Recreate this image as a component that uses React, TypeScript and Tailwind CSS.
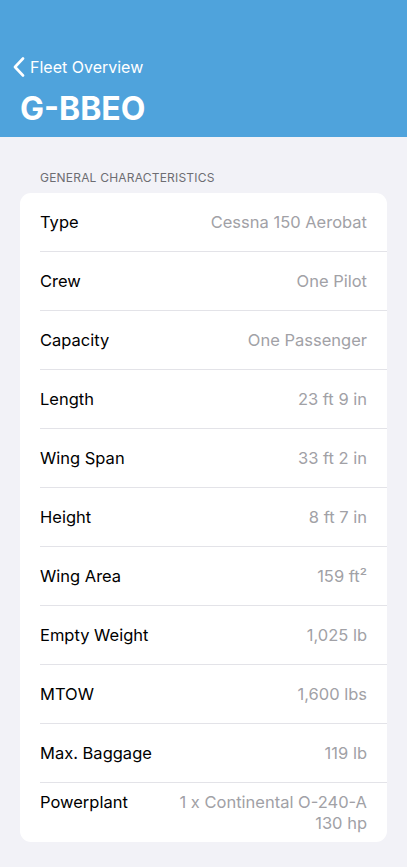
type Spec = { label: string; value: string[] };

const SPECS: Spec[] = [
  { label: "Type", value: ["Cessna 150 Aerobat"] },
  { label: "Crew", value: ["One Pilot"] },
  { label: "Capacity", value: ["One Passenger"] },
  { label: "Length", value: ["23 ft 9 in"] },
  { label: "Wing Span", value: ["33 ft 2 in"] },
  { label: "Height", value: ["8 ft 7 in"] },
  { label: "Wing Area", value: ["159 ft²"] },
  { label: "Empty Weight", value: ["1,025 lb"] },
  { label: "MTOW", value: ["1,600 lbs"] },
  { label: "Max. Baggage", value: ["119 lb"] },
  { label: "Powerplant", value: ["1 x Continental O-240-A", "130 hp"] },
];

function Row({ spec, last }: { spec: Spec; last: boolean }) {
  const multi = spec.value.length > 1;
  return (
    <div className="pl-5">
      <div
        className={
          "flex items-start justify-between pr-5 text-[16.5px] leading-[21px] " +
          (multi ? "py-[8.5px]" : "py-[18.5px]") +
          (last ? "" : " border-b border-[#e3e3e8]")
        }
      >
        <span className="text-black">{spec.label}</span>
        <span className="text-right text-[#a1a1a6]">
          {spec.value.map((v) => (
            <div key={v}>{v}</div>
          ))}
        </span>
      </div>
    </div>
  );
}

export default function App() {
  return (
    <div className="min-h-[867px] bg-[#f2f2f7] font-['Inter','Liberation_Sans',sans-serif]">
      <header className="h-[137px] bg-[#4fa3dc] pt-[55px] text-white">
        <div className="flex items-center pl-[13px]">
          <svg width="12" height="20" viewBox="0 0 12 20" fill="none" aria-hidden="true">
            <path
              d="M10 1.5L2 10l8 8.5"
              stroke="white"
              strokeWidth="2.6"
              strokeLinecap="round"
              strokeLinejoin="round"
            />
          </svg>
          <span className="ml-[5px] text-[16px]">Fleet Overview</span>
        </div>
        <h1 className="mt-[11px] pl-5 text-[32px] font-bold leading-[38px]">G-BBEO</h1>
      </header>

      <div className="px-5 pt-[32px]">
        <div className="mb-[6px] pl-5 text-[12px] uppercase tracking-[0.2px] text-[#6d6d72]">
          General Characteristics
        </div>
        <div className="overflow-hidden rounded-[11px] bg-white">
          {SPECS.map((s, i) => (
            <Row key={s.label} spec={s} last={i === SPECS.length - 1} />
          ))}
        </div>
      </div>
    </div>
  );
}
